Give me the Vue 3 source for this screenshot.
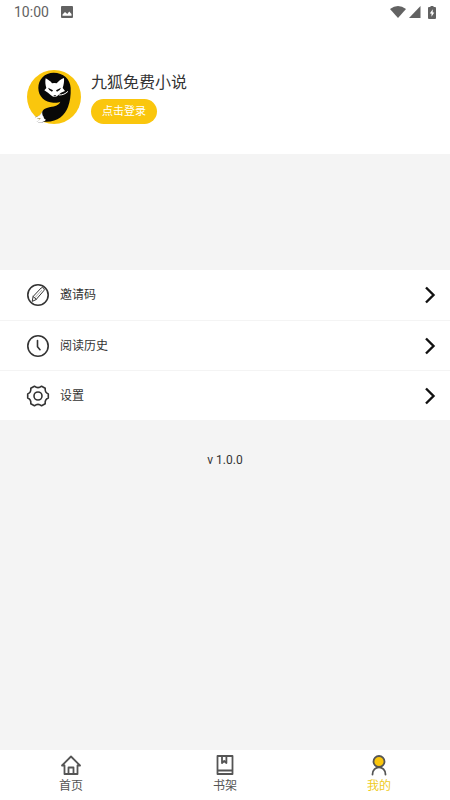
<script setup>
const rows = [
  { id: 'invite', label: '邀请码' },
  { id: 'history', label: '阅读历史' },
  { id: 'settings', label: '设置' },
]
const tabs = [
  { id: 'home', label: '首页' },
  { id: 'shelf', label: '书架' },
  { id: 'mine', label: '我的' },
]
const current = 'mine'
</script>

<template>
  <div class="page">
    <header class="top">
      <div class="status">
        <span class="time">10:00</span>
        <svg class="picture" width="12" height="12" viewBox="0 0 12 12">
          <path fill="#626262" fill-rule="evenodd" d="M1 0h10a1 1 0 0 1 1 1v10a1 1 0 0 1-1 1H1a1 1 0 0 1-1-1V1a1 1 0 0 1 1-1zM1.500 9.700h9V8L8.200 5.500 6.300 8 4 6 1.500 8.600z" />
        </svg>
        <div class="signals">
          <svg width="16" height="12" viewBox="0 0 16 12"><path fill="#626262" d="M0 3Q8-3 16 3L8 12z" /></svg>
          <svg width="12" height="12" viewBox="0 0 12 12"><path fill="#626262" d="M11.500 0v12H0z" /></svg>
          <svg class="battery" width="8" height="13" viewBox="0 0 8 13">
            <path fill="#626262" d="M2.500 0h3v1H7q1 0 1 1v10q0 1-1 1H1q-1 0-1-1V2q0-1 1-1h1.500z" />
            <path fill="#fff" d="M4.700 3.200 1.800 7.400h1.700v3.400l2.800-4.400H4.700z" />
          </svg>
        </div>
      </div>
      <div class="profile">
        <svg class="avatar" width="54" height="54" viewBox="22 24 162 162">
          <circle cx="103" cy="105" r="81" fill="#fac60d" />
          <path fill="#080808" d="M102 32C75 32 56 52 56 78c0 26 20 43 45 44 9 1 17-1 21-3-4 11-16 14-30 16-16 3-22 8-26 17-5 9-12 12-20 13 7 5 13 5 18 4-3 6-8 9-13 10 8 3 17 2 24 0 38 2 60-18 70-44 6-16 9-35 8-57-1-27-22-46-51-46z" />
          <path fill="#fff" d="M78 49c9 5 15 9 19 15q7-2 14 0c6-7 12-12 22-16 1 11-1 22-4 30l7 9-12 5c-5 3-9 11-18 13-10-1-15-9-21-13l-11-7 6-7c-3-9-4-19-2-29z" />
          <path fill="#080808" d="m85 77 15 8-3 4q-9-2-12-12zm39 0-15 8 3 4q9-2 12-12zM101 100h9l-4 4z" />
          <path fill="none" stroke="#fff" stroke-width="3" stroke-linecap="round" d="M119 99c10 0 18-3 25-10" />
          <path fill="#fff" d="M68 146c-3 11-12 19-23 19 7 5 13 5 18 4-3 6-8 9-13 10 9 4 22 2 29-6-5-2-7-5-7-9-4-4-5-10-4-18z" />
        </svg>
        <div class="who">
          <h1>九狐免费小说</h1>
          <button class="login" type="button">点击登录</button>
        </div>
      </div>
    </header>

    <main>
      <div class="menu">
        <button v-for="row in rows" :key="row.id" class="row" type="button">
          <svg class="lead" width="24" height="24" viewBox="0 0 24 24" fill="none" stroke="#333" stroke-width="1.600" stroke-linecap="round" stroke-linejoin="round">
            <template v-if="row.id === 'invite'">
              <circle cx="12" cy="12" r="10.200" />
              <path stroke-width="1" d="m6.300 18 .8-4.500 8-8.500q1.200-1 2.500.1t.2 2.600l-7.500 8.600zM7.100 13.500l3.200 2.800" />
              <path stroke-width=".4" d="m8.800 14.800 6.800-7.400" />
            </template>
            <template v-else-if="row.id === 'history'">
              <circle cx="12" cy="12" r="10.200" />
              <path d="M11.500 6.500v6.200l2.500 3" />
            </template>
            <template v-else>
              <path d="M8.400 2.200Q12 5.200 15.600 2.200L19.200 4.200Q18.700 8.600 22.300 10V14Q18.700 15.400 19.200 19.800L15.600 21.800Q12 18.800 8.400 21.800L4.800 19.800Q5.300 15.400 1.700 14V10Q5.300 8.600 4.800 4.200Z" />
              <circle cx="12" cy="12" r="4" />
            </template>
          </svg>
          <span>{{ row.label }}</span>
          <svg class="arrow" width="12" height="18" viewBox="0 0 12 18" fill="none" stroke="#111" stroke-width="2.400">
            <path d="m2 1.500 7.500 7.500L2 16.500" />
          </svg>
        </button>
      </div>
      <p class="version">v 1.0.0</p>
    </main>

    <nav class="tabs">
      <a v-for="tab in tabs" :key="tab.id" :href="'#' + tab.id" class="tab" :class="{ active: tab.id === current }">
        <svg width="22" height="22" viewBox="0 0 22 22" fill="none" stroke="#555" stroke-width="1.800" stroke-linejoin="round" stroke-linecap="round">
          <path v-if="tab.id === 'home'" d="M2 11.500 11 2.500l9 9h-2.500V20h-13v-8.500zM8.500 20v-6.500h5V20" />
          <path v-else-if="tab.id === 'shelf'" d="M3.500 2h15v18h-15zM3.500 16.500h15M8 2v7l2.200-2 2.200 2V2" />
          <template v-else>
            <circle cx="11" cy="7.500" r="5.500" fill="#fac60d" />
            <path d="M4.500 20.500c0-9.500 13-9.500 13 0" />
          </template>
        </svg>
        <span>{{ tab.label }}</span>
      </a>
    </nav>
  </div>
</template>

<style>
body {
  margin: 0;
  background: #f4f4f4;
}
</style>

<style scoped>
.page {
  display: flex;
  flex-direction: column;
  min-height: 100vh;
  color: #333;
  font-family: Roboto, "Noto Sans CJK SC", sans-serif;
}
.top {
  background: #fff;
  padding-bottom: 30px;
}
.status {
  display: flex;
  align-items: center;
  height: 24px;
  padding: 0 14px;
  color: #626262;
}
.time {
  font-size: 14px;
  line-height: 24px;
}
.picture {
  margin-left: 12px;
}
.signals {
  display: flex;
  align-items: center;
  gap: 3px;
  margin-left: auto;
}
.battery {
  margin-left: 4px;
}
.profile {
  display: flex;
  align-items: center;
  gap: 10px;
  padding: 46px 27px 0;
}
.avatar {
  flex: none;
}
.who {
  display: flex;
  flex-direction: column;
  align-items: flex-start;
  gap: 4px;
}
h1 {
  margin: 0;
  font-size: 16px;
  line-height: 24px;
  font-weight: 400;
}
.login {
  height: 25px;
  padding: 1px 11px 0;
  border: 0;
  border-radius: 13px;
  background: #fac60d;
  color: #fff;
  font: inherit;
  font-size: 11px;
  line-height: 24px;
}
main {
  flex: 1;
  padding-top: 116px;
}
.row {
  display: flex;
  align-items: center;
  width: 100%;
  height: 50px;
  padding: 0 14px 0 26px;
  border: 0;
  background: #fff;
  color: #333;
  font: inherit;
  font-size: 12px;
  line-height: 16px;
}
.row + .row {
  border-top: 1px solid #f4f4f4;
}
.row span {
  margin-left: 10px;
}
.arrow {
  margin-left: auto;
}
.version {
  margin: 32px 0 0;
  font-size: 12px;
  line-height: 16px;
  text-align: center;
}
.tabs {
  display: grid;
  grid-template-columns: repeat(3, 1fr);
  gap: 12px;
  height: 50px;
  background: #fff;
}
.tab {
  display: flex;
  flex-direction: column;
  align-items: center;
  padding-top: 4px;
  color: #555;
  font-size: 12px;
  line-height: 20px;
  text-decoration: none;
}
.active {
  color: #efcb1c;
}
</style>
